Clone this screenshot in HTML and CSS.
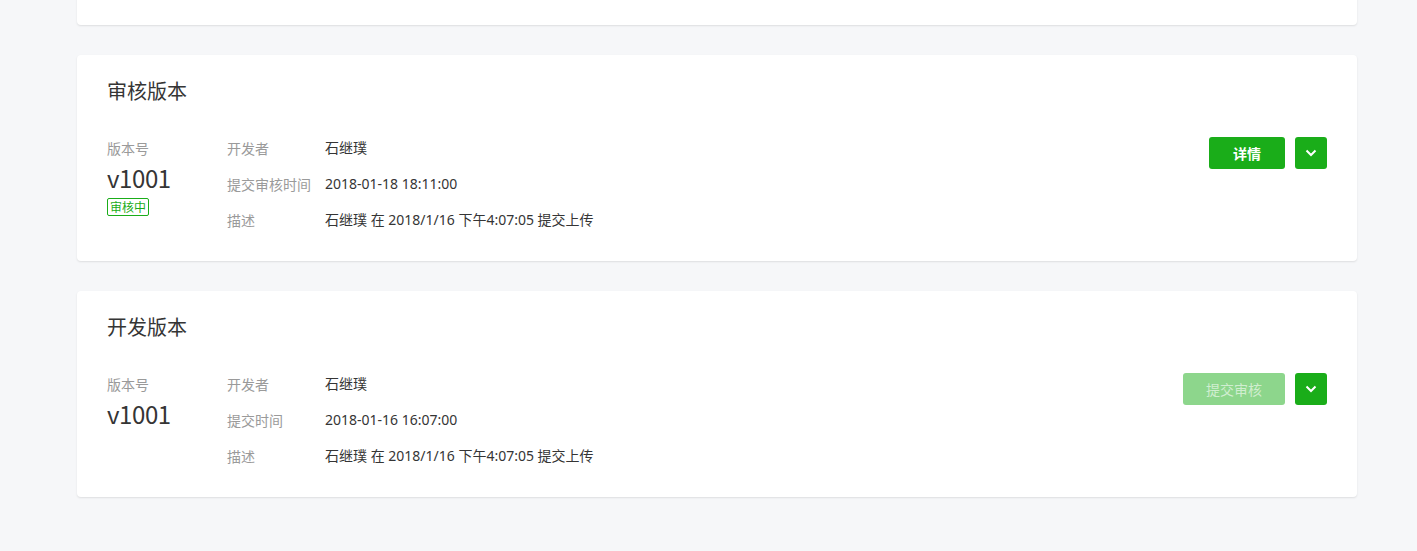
FILE: index.html
```html
<!DOCTYPE html>
<html lang="zh-CN">
<head>
<meta charset="utf-8">
<title>版本管理</title>
<link rel="stylesheet" href="styles.css">
</head>
<body>
<div class="page">
  <section class="card card-cut"></section>

  <section class="card">
    <h2 class="card-title">审核版本</h2>
    <div class="version">
      <div class="ver-col">
        <div class="ver-label">版本号</div>
        <div class="ver-num">v1001</div>
        <span class="tag">审核中</span>
      </div>
      <div class="info">
        <div class="row"><span class="label">开发者</span><span class="value">石继璞</span></div>
        <div class="row"><span class="label">提交审核时间</span><span class="value">2018-01-18 18:11:00</span></div>
        <div class="row"><span class="label">描述</span><span class="value">石继璞 在 2018/1/16 下午4:07:05 提交上传</span></div>
      </div>
      <div class="actions">
        <button class="btn btn-primary">详情</button>
        <button class="btn btn-icon" aria-label="更多"><svg width="12" height="8" viewBox="0 0 12 8"><path d="M1.5 1.5 L6 6 L10.5 1.5" fill="none" stroke="#fff" stroke-width="2"/></svg></button>
      </div>
    </div>
  </section>

  <section class="card">
    <h2 class="card-title">开发版本</h2>
    <div class="version">
      <div class="ver-col">
        <div class="ver-label">版本号</div>
        <div class="ver-num">v1001</div>
      </div>
      <div class="info">
        <div class="row"><span class="label">开发者</span><span class="value">石继璞</span></div>
        <div class="row"><span class="label">提交时间</span><span class="value">2018-01-16 16:07:00</span></div>
        <div class="row"><span class="label">描述</span><span class="value">石继璞 在 2018/1/16 下午4:07:05 提交上传</span></div>
      </div>
      <div class="actions">
        <button class="btn btn-primary btn-disabled">提交审核</button>
        <button class="btn btn-icon" aria-label="更多"><svg width="12" height="8" viewBox="0 0 12 8"><path d="M1.5 1.5 L6 6 L10.5 1.5" fill="none" stroke="#fff" stroke-width="2"/></svg></button>
      </div>
    </div>
  </section>
</div>
</body>
</html>
```
FILE: styles.css
```css
* { box-sizing: border-box; }
html, body {
  margin: 0;
  padding: 0;
  background: #f6f7f9;
  font-family: "Noto Sans CJK SC", "Noto Sans", sans-serif;
  color: #353535;
}
.page {
  width: 1280px;
  margin-left: 77px;
  display: flex;
  flex-direction: column;
  gap: 30px;
  padding-bottom: 54px;
}
.card {
  background: #fff;
  border-radius: 4px;
  box-shadow: 0 1px 2px rgba(0, 0, 0, 0.1);
  padding: 24px 30px 23px;
}
.card-cut {
  height: 35px;
  margin-top: -10px;
  padding: 0;
}
.card-title {
  margin: 0;
  font-size: 20px;
  font-weight: 400;
  line-height: 24px;
  color: #353535;
}
.version {
  display: flex;
  margin-top: 27px;
}
.ver-col {
  width: 120px;
  display: flex;
  flex-direction: column;
  align-items: flex-start;
}
.ver-label {
  font-size: 14px;
  line-height: 36px;
  color: #9a9a9a;
}
.ver-num {
  font-size: 24px;
  line-height: 24px;
  letter-spacing: -0.4px;
  color: #353535;
}
.tag {
  margin-top: 8px;
  height: 18px;
  padding: 0 2px;
  border: 1px solid #1aad19;
  border-radius: 2px;
  color: #1aad19;
  font-size: 12px;
  line-height: 16px;
}
.info {
  flex: 1;
  display: flex;
  flex-direction: column;
}
.row {
  display: flex;
  font-size: 14px;
  line-height: 36px;
}
.label {
  width: 98px;
  color: #9a9a9a;
}
.value {
  color: #353535;
  font-family: "Noto Sans", "Noto Sans CJK SC", sans-serif;
}
.actions {
  display: flex;
  gap: 10px;
  margin-top: 7px;
  align-items: flex-start;
}
.btn {
  height: 32px;
  border: none;
  border-radius: 3px;
  background: #1aad19;
  color: #fff;
  font-family: inherit;
  font-size: 14px;
  padding: 0;
  display: flex;
  align-items: center;
  justify-content: center;
}
.btn-primary {
  width: 76px;
  font-weight: 700;
}
.btn-disabled {
  background: #8dd68c;
  color: rgba(255, 255, 255, 0.6);
  font-weight: 400;
  width: 102px;
}
.btn-icon {
  width: 32px;
}
```
